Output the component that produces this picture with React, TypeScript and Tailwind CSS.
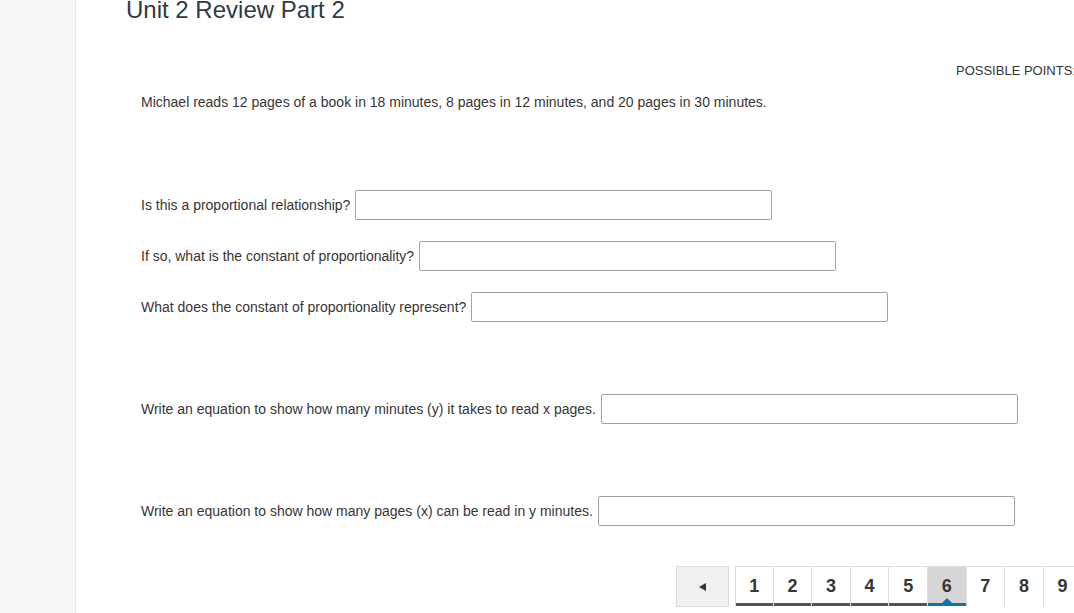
const questions = [
  { label: 'Is this a proportional relationship?', mt: 'mt-[79px]' },
  { label: 'If so, what is the constant of proportionality?', mt: 'mt-[21px]' },
  { label: 'What does the constant of proportionality represent?', mt: 'mt-[21px]' },
  { label: 'Write an equation to show how many minutes (y) it takes to read x pages.', mt: 'mt-[72px]' },
  { label: 'Write an equation to show how many pages (x) can be read in y minutes.', mt: 'mt-[72px]' },
];

const pages = [1, 2, 3, 4, 5, 6, 7, 8, 9, 10];

const App = () => {
  return (
    <div
      className="flex w-[1074px] h-[613px] overflow-hidden bg-white text-[#363636]"
      style={{ fontFamily: '"Liberation Sans", Arial, sans-serif' }}
    >
      <aside className="w-[76px] shrink-0 bg-[#f8f7f5] border-r border-[#e6e5e3]" />

      <main className="flex-1 pl-[50px] min-w-0">
        <h1 className="-mt-[4px] text-[24px] leading-[28px] text-[#2d3b45] whitespace-nowrap">
          Unit 2 Review Part 2
        </h1>

        <div className="mt-[39px] pl-[830px] text-[13px] leading-[16px] whitespace-nowrap">
          POSSIBLE POINTS: 10
        </div>

        <div className="pl-[15px]">
          <p className="mt-[14px] text-[14px] leading-[18px]">
            Michael reads 12 pages of a book in 18 minutes, 8 pages in 12 minutes, and 20 pages in 30 minutes.
          </p>

          {questions.map((q) => (
            <div key={q.label} className={`${q.mt} flex items-center gap-[5px] h-[30px] whitespace-nowrap`}>
              <span className="text-[14px] leading-[18px]">{q.label}</span>
              <input
                type="text"
                className="w-[417px] h-[30px] shrink-0 border border-[#a3a3a3] rounded-[2px] bg-white"
              />
            </div>
          ))}
        </div>

        <div className="mt-[40px] ml-[550px] flex items-start gap-[6px] w-[600px]">
          <button className="w-[53px] h-[41px] shrink-0 flex items-center justify-center bg-[#f0f0f0] border border-[#dcdcdc]">
            <svg width="7" height="8" viewBox="0 0 7 8">
              <path d="M0 4 L7 0 L7 8 Z" fill="#333" />
            </svg>
          </button>

          <div className="flex">
            {pages.map((p) => (
              <div
                key={p}
                className={`relative w-[38.6px] h-[40px] shrink-0 flex flex-col border-t border-r border-[#dedede] ${
                  p === 1 ? 'border-l' : ''
                }`}
              >
                <div
                  className={`flex-1 flex items-center justify-center pt-[3px] text-[18px] font-bold ${
                    p === 6 ? 'bg-[#d6d6d6]' : 'bg-white'
                  }`}
                >
                  {p}
                </div>
                <div
                  className={`h-[3px] ${
                    p < 6 ? 'bg-[#555]' : p === 6 ? 'bg-[#0b74b1]' : 'bg-transparent'
                  }`}
                />
                {p === 6 && (
                  <div className="absolute left-1/2 -translate-x-1/2 bottom-[3px] w-0 h-0 border-l-[5px] border-r-[5px] border-b-[5px] border-l-transparent border-r-transparent border-b-[#0b74b1]" />
                )}
              </div>
            ))}
          </div>
        </div>
      </main>
    </div>
  );
};

export default App;
